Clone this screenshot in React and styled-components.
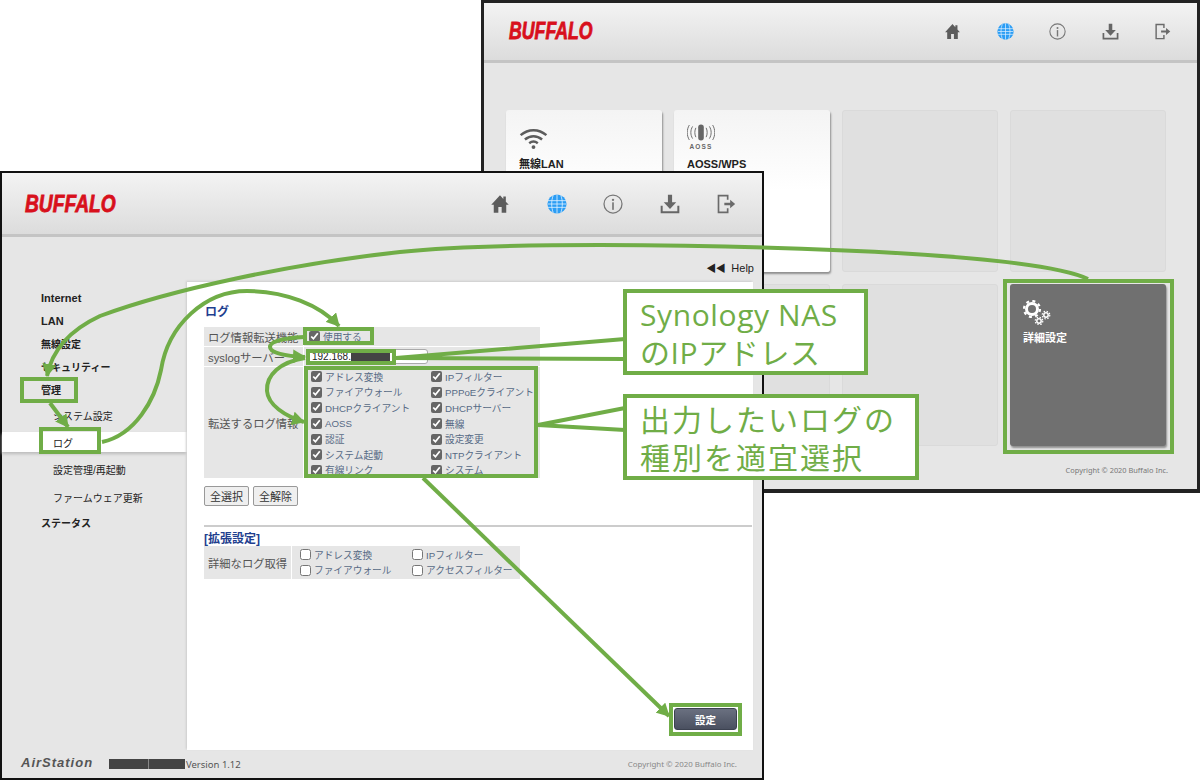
import React from 'react';
import styled, { createGlobalStyle } from 'styled-components';

const GREEN = '#70ad47';

const leftLogs = ['アドレス変換', 'ファイアウォール', 'DHCPクライアント', 'AOSS', '認証', 'システム起動', '有線リンク'];
const rightLogs = ['IPフィルター', 'PPPoEクライアント', 'DHCPサーバー', '無線', '設定変更', 'NTPクライアント', 'システム'];
const extraLogs = ['アドレス変換', 'IPフィルター', 'ファイアウォール', 'アクセスフィルター'];

const navItems = [
  { label: 'Internet', size: 11 },
  { label: 'LAN', size: 11 },
  { label: '無線設定', size: 10 },
  { label: 'セキュリティー', size: 10 },
  { label: '管理', size: 10 },
  { label: 'システム設定', size: 10, sub: true },
  { label: 'ログ', size: 10, sub: true, active: true },
  { label: '設定管理/再起動', size: 10, sub: true },
  { label: 'ファームウェア更新', size: 10, sub: true },
  { label: 'ステータス', size: 10 },
];

const HomeIcon = (props) => (
  <svg viewBox="0 0 24 24" {...props}>
    <path fill="#5c5c5c" d="M12 1.500 1.500 13h3v9.500h5.500v-7h4v7h5.500V13h3l-3.500-3.800V3h-3v3z" />
  </svg>
);

const GlobeIcon = (props) => (
  <svg viewBox="0 0 24 24" {...props}>
    <circle cx="12" cy="12" r="11.500" fill="#2b9df4" />
    <path
      fill="none"
      stroke="#dff0ff"
      strokeWidth="1"
      d="M1 8h22M1 12h22M1 16h22M12 .5v23M7.500 1.500c-2.500 6-2.500 15 0 21M16.500 1.500c2.500 6 2.500 15 0 21"
    />
  </svg>
);

const InfoIcon = (props) => (
  <svg viewBox="0 0 24 24" {...props}>
    <circle cx="12" cy="12" r="10.800" fill="none" stroke="#777" strokeWidth="1.500" />
    <circle cx="12" cy="7" r="1.400" fill="#777" />
    <rect x="11" y="10" width="2" height="9" fill="#777" />
  </svg>
);

const DownloadIcon = (props) => (
  <svg viewBox="0 0 24 24" {...props}>
    <path fill="#666" d="M9.500 1h5v9h5L12 18 4.500 10h5z" />
    <path fill="none" stroke="#666" strokeWidth="2.400" d="M2 14v8h20v-8" />
  </svg>
);

const LogoutIcon = (props) => (
  <svg viewBox="0 0 24 24" {...props}>
    <path fill="none" stroke="#6a6a6a" strokeWidth="2" d="M14 7V2H3v20h11v-5" />
    <path fill="#6a6a6a" d="M10 10.500h7V7l6 5-6 5v-3.500h-7z" />
  </svg>
);

const WifiIcon = (props) => (
  <svg viewBox="0 0 30 22" {...props}>
    <g fill="none" stroke="#5c5c5c" strokeWidth="2.600">
      <path d="M1.500 7.500c8-7 19-7 27 0" />
      <path d="M6 12c5.500-4.500 12.500-4.500 18 0" />
      <path d="M10.500 16c2.800-2.200 6.200-2.200 9 0" />
    </g>
    <circle cx="15" cy="20" r="2" fill="#5c5c5c" />
  </svg>
);

const AossIcon = (props) => (
  <svg viewBox="0 0 30 18" {...props}>
    <rect x="12" y="0.500" width="6" height="17" rx="3" fill="#666" />
    <g fill="none" stroke="#666" strokeWidth="1">
      <path d="M9.500 4c-1.500 3-1.500 7 0 10M20.500 4c1.500 3 1.500 7 0 10" />
      <path d="M6 2.500c-2.500 4-2.500 9 0 13M24 2.500c2.500 4 2.500 9 0 13" />
      <path d="M2.500 1c-3 5-3 11 0 16M27.500 1c3 5 3 11 0 16" />
    </g>
  </svg>
);

const GearsIcon = (props) => (
  <svg viewBox="0 0 28 25" {...props}>
    <g fill="none" stroke="#fff">
      <circle cx="9" cy="9" r="5.500" strokeWidth="3" />
      <circle cx="9" cy="9" r="8" strokeWidth="2.200" strokeDasharray="3 3.300" />
      <circle cx="23" cy="15" r="2.200" strokeWidth="1.500" />
      <circle cx="23" cy="15" r="3.800" strokeWidth="1.200" strokeDasharray="1.500 1.500" />
      <circle cx="16" cy="21" r="2.200" strokeWidth="1.500" />
      <circle cx="16" cy="21" r="3.800" strokeWidth="1.200" strokeDasharray="1.500 1.500" />
    </g>
  </svg>
);

const HeaderIcons = ({ size, gap }) => (
  <IconRow $size={size} $gap={gap}>
    <HomeIcon />
    <GlobeIcon />
    <InfoIcon />
    <DownloadIcon />
    <LogoutIcon />
  </IconRow>
);

const Check = ({ label, checked }) => (
  <CheckLabel>
    <CheckBox type="checkbox" defaultChecked={checked} />
    {label}
  </CheckLabel>
);

const Annotations = () => (
  <Overlay viewBox="0 0 1200 780">
    <defs>
      <marker id="head" markerUnits="userSpaceOnUse" markerWidth="15" markerHeight="14" refX="12" refY="7" orient="auto">
        <path d="M0 0 13 7 0 14z" fill={GREEN} />
      </marker>
    </defs>
    <g fill="none" stroke={GREEN} strokeWidth="4">
      <path markerEnd="url(#head)" d="M1088 279C1040 256 820 246 600 245C510 245 450 247 400 252C290 264 170 290 100 316C70 330 52 350 47 376" />
      <path markerEnd="url(#head)" d="M102 442C135 435 155 400 161 370C168 325 205 291 247 291C285 291 320 305 339 326" />
      <path markerEnd="url(#head)" d="M50 403 68 427" />
      <path markerEnd="url(#head)" d="M304 337C285 338 270 341 270 347C270 353 285 356 305 357" />
      <path markerEnd="url(#head)" d="M305 358C280 362 266 375 267 391C268 405 285 416 304 422" />
      <path markerEnd="url(#head)" d="M423 478 669 716" />
      <path d="M396 358 625 339M396 358 625 359" />
      <path d="M538 425 625 408M538 425 625 430" />
      <rect x="22" y="379" width="54" height="22" />
      <rect x="41" y="429" width="58" height="23" />
      <rect x="305" y="329" width="67" height="14" />
      <rect x="308" y="351" width="86" height="12" />
      <rect x="306" y="368" width="230" height="108" />
      <rect x="671" y="705" width="69" height="29" />
      <rect x="1005" y="281" width="167" height="171" />
    </g>
  </Overlay>
);

export default function App() {
  return (
    <Canvas>
      <GlobalStyle />

      <BackWindow>
        <Header $height={60}>
          <Logo $size={23} $scale={0.77} $offset={2}>BUFFALO</Logo>
          <HeaderIcons size={17} gap={35.500} />
        </Header>
        <TileArea>
          <TileGrid>
            <Tile $kind="on">
              <TileIcon>
                <WifiIcon width="29" height="21" />
              </TileIcon>
              <TileTitle>無線LAN</TileTitle>
            </Tile>
            <Tile $kind="on">
              <TileIcon>
                <AossWrap>
                  <AossIcon width="28" height="17" />
                  <AossText>AOSS</AossText>
                </AossWrap>
              </TileIcon>
              <TileTitle>AOSS/WPS</TileTitle>
            </Tile>
            <Tile />
            <Tile />
            <Tile />
            <Tile />
            <Tile />
            <Tile $kind="dark">
              <TileIcon>
                <GearsIcon width="28" height="25" />
              </TileIcon>
              <TileTitle $light>詳細設定</TileTitle>
            </Tile>
          </TileGrid>
          <BackCopyright>Copyright © 2020 Buffalo Inc.</BackCopyright>
        </TileArea>
      </BackWindow>

      <FrontWindow>
        <Header $height={64}>
          <Logo $size={24} $scale={0.8}>BUFFALO</Logo>
          <HeaderIcons size={20} gap={36.500} />
        </Header>
        <HelpRow>
          <HelpArrows>◀◀</HelpArrows> Help
        </HelpRow>
        <Main>
          <Nav>
            {navItems.map((item) => (
              <NavItem key={item.label} $sub={item.sub} $active={item.active} $size={item.size}>
                {item.label}
              </NavItem>
            ))}
          </Nav>
          <Panel>
            <PanelTitle>ログ</PanelTitle>
            <FormTable $label={99} $width={336}>
              <FormLabel>ログ情報転送機能</FormLabel>
              <FormValue>
                <Check label="使用する" checked />
              </FormValue>
              <FormLabel>syslogサーバー</FormLabel>
              <FormValue>
                <IpField>
                  192.168.
                  <Redacted $width={39} />
                </IpField>
              </FormValue>
              <FormLabel>転送するログ情報</FormLabel>
              <LogGrid>
                {leftLogs.map((label, i) => (
                  <React.Fragment key={label}>
                    <Check label={label} checked />
                    <Check label={rightLogs[i]} checked />
                  </React.Fragment>
                ))}
              </LogGrid>
            </FormTable>
            <ButtonRow>
              <PlainButton>全選択</PlainButton>
              <PlainButton>全解除</PlainButton>
            </ButtonRow>
            <Divider />
            <SectionTitle>[拡張設定]</SectionTitle>
            <FormTable $label={87} $width={316}>
              <FormLabel>詳細なログ取得</FormLabel>
              <ExtraGrid>
                {extraLogs.map((label) => (
                  <Check key={label} label={label} />
                ))}
              </ExtraGrid>
            </FormTable>
            <SubmitRow>
              <SubmitButton>設定</SubmitButton>
            </SubmitRow>
          </Panel>
        </Main>
        <Footer>
          <AirStation>AirStation</AirStation>
          <FooterBar $width={76} />
          <Version>Version 1.12</Version>
          <FrontCopyright>Copyright © 2020 Buffalo Inc.</FrontCopyright>
        </Footer>
      </FrontWindow>

      <Annotations />

      <Callout $left={623} $top={289} $width={245} $height={86} $spacing={0.6}>
        Synology NAS
        <br />
        のIPアドレス
      </Callout>
      <Callout $left={623} $top={394} $width={296} $height={86} $spacing={2}>
        出力したいログの
        <br />
        種別を適宜選択
      </Callout>
    </Canvas>
  );
}

const GlobalStyle = createGlobalStyle`
  html, body {
    margin: 0;
    padding: 0;
    background: #fff;
  }
  * {
    box-sizing: border-box;
  }
`;

const Canvas = styled.div`
  position: relative;
  width: 1200px;
  height: 780px;
  overflow: hidden;
  background: #fff;
  font-family: "Liberation Sans", "Noto Sans CJK JP", sans-serif;
  color: #333;
`;

const BackWindow = styled.section`
  position: absolute;
  left: 481px;
  top: 0;
  width: 719px;
  height: 493px;
  display: flex;
  flex-direction: column;
  border: 3px solid #222;
  border-bottom-width: 4px;
  background: #e6e6e6;
`;

const FrontWindow = styled.section`
  position: absolute;
  left: 0;
  top: 171px;
  width: 764px;
  height: 609px;
  display: flex;
  flex-direction: column;
  border: 2px solid #111;
  background: #e6e6e6;
`;

const Header = styled.header`
  flex: none;
  height: ${({ $height }) => $height}px;
  display: flex;
  align-items: center;
  justify-content: space-between;
  padding: 0 26px 0 23px;
  background: linear-gradient(#f3f3f3, #dcdcdc);
  border-bottom: 3px solid #c4c4c4;
`;

const Logo = styled.div`
  width: 90px;
  margin-left: ${({ $offset }) => $offset || 0}px;
  font-family: "Liberation Sans", sans-serif;
  font-size: ${({ $size }) => $size}px;
  font-weight: 700;
  font-style: italic;
  color: #d8101c;
  -webkit-text-stroke: 0.8px #d8101c;
  white-space: nowrap;
  transform: scaleX(${({ $scale }) => $scale});
  transform-origin: left center;
`;

const IconRow = styled.nav`
  display: flex;
  align-items: center;
  gap: ${({ $gap }) => $gap}px;
  svg {
    display: block;
    width: ${({ $size }) => $size}px;
    height: ${({ $size }) => $size}px;
  }
`;

const TileArea = styled.div`
  flex: 1;
  display: flex;
  flex-direction: column;
  padding: 47px 29px 0 22px;
`;

const TileGrid = styled.div`
  display: grid;
  grid-template-columns: repeat(4, 156px);
  grid-auto-rows: 162px;
  gap: 12px;
`;

const Tile = styled.div`
  display: flex;
  flex-direction: column;
  align-items: flex-start;
  padding: 12px 13px;
  border-radius: 3px;
  ${({ $kind }) =>
    $kind === 'on'
      ? `background: linear-gradient(#f4f4f4, #fff 50%);
         box-shadow: 1px 2px 2px #8f8f8f;`
      : $kind === 'dark'
        ? `background: #707070;
           box-shadow: 1px 2px 2px #8f8f8f;`
        : `background: #e0e0e0;
           border: 1px solid #dadada;`}
`;

const TileIcon = styled.div`
  height: 32px;
  display: flex;
  align-items: center;
`;

const TileTitle = styled.div`
  margin-top: 2px;
  font-size: 11px;
  line-height: 16px;
  font-weight: 700;
  color: ${({ $light }) => ($light ? '#fff' : '#222')};
`;

const AossWrap = styled.div`
  display: flex;
  flex-direction: column;
  align-items: center;
  gap: 2px;
  margin-top: -2px;
`;

const AossText = styled.div`
  font-size: 6.500px;
  line-height: 8px;
  font-weight: 700;
  letter-spacing: 1.200px;
  color: #666;
`;

const BackCopyright = styled.div`
  margin-top: 19px;
  text-align: right;
  font-family: "Noto Sans", sans-serif;
  font-size: 7.400px;
  color: #777;
`;

const HelpRow = styled.div`
  flex: none;
  height: 45px;
  padding: 23px 8px 0 0;
  text-align: right;
  font-size: 11px;
  color: #222;
`;

const HelpArrows = styled.span`
  font-size: 10px;
  letter-spacing: -0.5px;
  margin-right: 3px;
`;

const Main = styled.div`
  flex: none;
  height: 468px;
  display: flex;
`;

const Nav = styled.aside`
  flex: none;
  width: 185px;
  display: flex;
  flex-direction: column;
  padding-top: 4px;
`;

const NavItem = styled.div`
  display: flex;
  align-items: center;
  flex: none;
  height: ${({ $sub, $active }) => ($active ? 20 : $sub ? 28 : 23)}px;
  margin: ${({ $active }) => ($active ? '3px 0' : '0')};
  padding-left: ${({ $sub }) => ($sub ? 51 : 39)}px;
  font-size: ${({ $size }) => $size}px;
  font-weight: ${({ $sub }) => ($sub ? 400 : 700)};
  color: #222;
  ${({ $active }) => $active && 'background: #fff; box-shadow: 0 2px 3px #bbb;'}
`;

const Panel = styled.main`
  flex: none;
  width: 566px;
  display: flex;
  flex-direction: column;
  align-items: flex-start;
  padding: 22px 0 0 17px;
  background: #fff;
  box-shadow: -1px -1px 2px #ccc;
`;

const PanelTitle = styled.h2`
  margin: 0 0 7px 1px;
  font-size: 12px;
  line-height: 16px;
  color: #1f3f8f;
`;

const FormTable = styled.div`
  display: grid;
  grid-template-columns: ${({ $label }) => $label}px 1fr;
  gap: 1px;
  width: ${({ $width }) => $width}px;
`;

const FormLabel = styled.div`
  display: flex;
  align-items: center;
  padding-left: 4px;
  background: #e6e6e6;
  font-size: 11.300px;
  color: #555;
  white-space: nowrap;
`;

const FormValue = styled.div`
  display: flex;
  align-items: center;
  height: 19px;
  padding-left: 5px;
  background: #e6e6e6;
`;

const CheckLabel = styled.label`
  display: flex;
  align-items: center;
  gap: 3px;
  height: 15.600px;
  font-size: 9.700px;
  color: #566a85;
  white-space: nowrap;
`;

const CheckBox = styled.input`
  width: 11px;
  height: 11px;
  margin: 0;
  accent-color: #666;
`;

const IpField = styled.div`
  display: flex;
  align-items: center;
  width: 119px;
  height: 15px;
  padding-left: 2px;
  background: #fff;
  border: 1px solid #aaa;
  border-radius: 3px;
  font-size: 10px;
  color: #222;
`;

const Redacted = styled.span`
  display: inline-block;
  flex: none;
  width: ${({ $width }) => $width}px;
  height: 10px;
  background: #444;
`;

const FooterBar = styled(Redacted)`
  background: linear-gradient(90deg, #444 51%, #888 51%, #888 52%, #444 52%);
`;

const LogGrid = styled.div`
  display: grid;
  grid-template-columns: 120px 1fr;
  padding: 2px 0 0 7px;
  height: 111px;
  background: #e6e6e6;
`;

const ExtraGrid = styled.div`
  display: grid;
  grid-template-columns: 112px 1fr;
  align-content: center;
  height: 33px;
  padding-left: 8px;
  background: #e6e6e6;
`;

const ButtonRow = styled.div`
  display: flex;
  gap: 4px;
  margin-top: 8px;
`;

const PlainButton = styled.button`
  width: 45px;
  height: 20px;
  padding: 0;
  background: #efefef;
  border: 1px solid #999;
  border-radius: 2px;
  font-family: inherit;
  font-size: 11px;
  color: #333;
`;

const Divider = styled.hr`
  width: 548px;
  height: 2px;
  margin: 19px 0 5px;
  border: none;
  background: #ccc;
`;

const SectionTitle = styled.h3`
  margin: 0;
  font-size: 12px;
  line-height: 14px;
  color: #1f3f8f;
`;

const SubmitRow = styled.div`
  align-self: stretch;
  display: flex;
  justify-content: flex-end;
  margin-top: auto;
  padding: 0 16px 20px 0;
`;

const SubmitButton = styled.button`
  width: 63px;
  height: 22px;
  padding: 0;
  background: linear-gradient(#6a7080, #4a5060);
  border: 1px solid #3c4250;
  border-radius: 3px;
  font-family: inherit;
  font-size: 10.500px;
  font-weight: 700;
  color: #fff;
`;

const Footer = styled.footer`
  flex: 1;
  display: flex;
  align-items: center;
  padding: 0 25px 0 19px;
`;

const AirStation = styled.div`
  width: 88px;
  margin-top: -4px;
  font-size: 13px;
  font-weight: 700;
  font-style: italic;
  letter-spacing: 1px;
  color: #555;
`;

const Version = styled.div`
  margin-left: 1px;
  font-family: "Noto Sans", sans-serif;
  font-size: 9.500px;
  color: #555;
`;

const FrontCopyright = styled.div`
  margin-left: auto;
  font-family: "Noto Sans", sans-serif;
  font-size: 7.900px;
  color: #888;
`;

const Overlay = styled.svg`
  position: absolute;
  left: 0;
  top: 0;
  width: 1200px;
  height: 780px;
  pointer-events: none;
`;

const Callout = styled.div`
  position: absolute;
  left: ${({ $left }) => $left}px;
  top: ${({ $top }) => $top}px;
  width: ${({ $width }) => $width}px;
  height: ${({ $height }) => $height}px;
  padding: 3px 0 0 13px;
  background: #fff;
  border: 4px solid ${GREEN};
  font-family: "Open Sans", "Noto Sans CJK JP", sans-serif;
  font-size: 30px;
  font-weight: 400;
  line-height: 38px;
  letter-spacing: ${({ $spacing }) => $spacing}px;
  color: ${GREEN};
  white-space: nowrap;
`;
